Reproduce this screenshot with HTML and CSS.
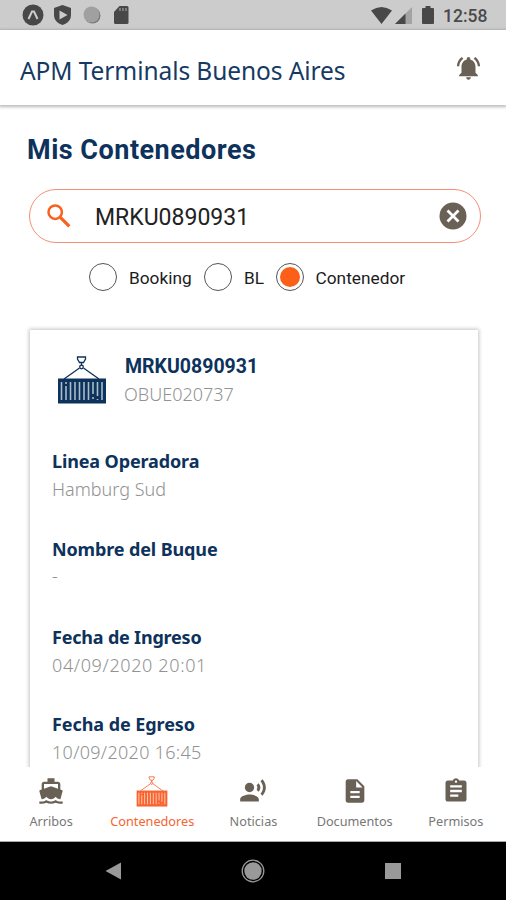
FILE: index.html
```html
<!DOCTYPE html>
<html lang="es">
<head>
<meta charset="utf-8">
<title>APM Terminals Buenos Aires</title>
<link rel="stylesheet" href="styles.css">
</head>
<body>
<svg class="defs" width="0" height="0" aria-hidden="true">
  <symbol id="container" viewBox="0 0 50 48">
    <g fill="none" stroke="currentColor" stroke-width="1.3">
      <path d="M20.500 1h8v2l-2 3.500h-4L20.500 3zM24.500 6.500v3M7 23l15.500-11M42 23L26.500 12"/>
      <circle cx="24.500" cy="11" r="1.800"/>
    </g>
    <path fill="currentColor" d="M1 22.500h48v25H1z"/>
    <path class="slats" fill="none" stroke-width="1.600" d="M4.500 26v18M9 26v2M9 30v14M13.500 26v18M18 26v18M22.500 26v18M27 26v18M31.500 26v18M36 26v12M40.500 26v14M45 26v18M36 41v2M40.500 43v1"/>
  </symbol>
</svg>
<div class="phone">
  <div class="status">
    <svg class="s-app" viewBox="0 0 22 22"><circle cx="11" cy="11" r="10.500" fill="#484848"/><path d="M6.500 15L10 7.500h2L15.500 15" fill="none" stroke="#ccc" stroke-width="2"/></svg>
    <svg class="s-shield" viewBox="0 0 17 20"><path fill="#484848" d="M8.500 0L17 3v7c0 5-3.500 8.500-8.500 10C3.500 18.500 0 15 0 10V3z"/><path fill="#ccc" d="M5.500 5.500v9l8-4.500z"/></svg>
    <svg class="s-dot" viewBox="0 0 18 18"><circle cx="9.500" cy="9.500" r="8" fill="#777"/><circle cx="8.500" cy="8.500" r="8" fill="#a0a0a0"/></svg>
    <svg class="s-sd" viewBox="0 0 15 18"><path fill="#484848" d="M5.500 0H13q1.500 0 1.500 1.500v15Q14.500 18 13 18H1.500Q0 18 0 16.500V6z"/><path stroke="#999" stroke-width="1.300" d="M6 2v3M9 2v3M12 2v3"/></svg>
    <svg class="s-wifi" viewBox="0 0 21 17"><path fill="#484848" d="M0 3.500Q10.500-3.500 21 3.500L10.500 17z"/></svg>
    <svg class="s-signal" viewBox="0 0 17 17"><path fill="#a3a3a3" d="M17 0v17H0z"/><path fill="#484848" d="M10.500 6.500V17H0z"/></svg>
    <svg class="s-battery" viewBox="0 0 12 18"><path fill="#484848" d="M3.500 0h5v2H11q1 0 1 1v14q0 1-1 1H1q-1 0-1-1V3q0-1 1-1h2.500z"/></svg>
    <span class="clock">12:58</span>
  </div>
  <header class="header">
    <h1 class="title">APM Terminals Buenos Aires</h1>
    <svg class="bell" viewBox="0 0 24 24"><path fill="currentColor" d="M7.580 4.080L6.150 2.650C3.750 4.480 2.170 7.300 2.030 10.500h2c.15-2.650 1.510-4.970 3.550-6.420zm12.390 6.420h2c-.15-3.200-1.730-6.020-4.120-7.850l-1.420 1.430c2.020 1.450 3.390 3.770 3.540 6.420zM18 11c0-3.070-1.640-5.640-4.500-6.320V4c0-.83-.67-1.500-1.500-1.500s-1.500.67-1.500 1.500v.68C7.630 5.360 6 7.920 6 11v5l-2 2v1h16v-1l-2-2v-5zm-6 11c1.100 0 2-.9 2-2h-4c0 1.100.89 2 2 2z"/></svg>
  </header>
  <main class="content">
    <h2 class="heading">Mis Contenedores</h2>
    <div class="search">
      <svg class="lens" viewBox="0 0 24 24"><circle cx="8.200" cy="8.200" r="6.700" fill="none" stroke="currentColor" stroke-width="2.500"/><path d="M13.300 13.300l9 9" stroke="currentColor" stroke-width="3.200"/></svg>
      <span class="query">MRKU0890931</span>
      <svg class="clear" viewBox="0 0 28 28"><circle cx="14" cy="14" r="13.500" fill="#696056"/><path d="M8.500 8.500l11 11M19.500 8.500l-11 11" stroke="#fff" stroke-width="2.800"/></svg>
    </div>
    <div class="options">
      <span class="radio"></span><span class="option booking">Booking</span>
      <span class="radio"></span><span class="option bl">BL</span>
      <span class="radio checked"></span><span class="option cont">Contenedor</span>
    </div>
    <section class="card">
      <div class="card-head">
        <svg class="box"><use href="#container"/></svg>
        <div>
          <div class="code">MRKU0890931</div>
          <div class="value booking-no">OBUE020737</div>
        </div>
      </div>
      <div class="field"><div class="label l1">Linea Operadora</div><div class="value v1">Hamburg Sud</div></div>
      <div class="field"><div class="label l2">Nombre del Buque</div><div class="value dash">-</div></div>
      <div class="field"><div class="label l3">Fecha de Ingreso</div><div class="value v3">04/09/2020 20:01</div></div>
      <div class="field"><div class="label l4">Fecha de Egreso</div><div class="value v4">10/09/2020 16:45</div></div>
    </section>
  </main>
  <nav class="tabs">
    <div class="tab"><svg viewBox="0 0 24 24"><path fill="currentColor" d="M20 21c-1.390 0-2.780-.47-4-1.320-2.440 1.710-5.560 1.710-8 0C6.780 20.530 5.390 21 4 21H2v2h2c1.380 0 2.740-.35 4-.99 2.520 1.290 5.480 1.290 8 0 1.260.65 2.620.99 4 .99h2v-2h-2zM3.950 19H4c1.600 0 3.020-.88 4-2 .98 1.120 2.400 2 4 2s3.020-.88 4-2c.98 1.120 2.400 2 4 2h.05l1.890-6.680c.08-.26.06-.54-.06-.78s-.34-.42-.6-.5L20 10.620V6c0-1.100-.9-2-2-2h-3V1H9v3H6c-1.100 0-2 .9-2 2v4.620l-1.290.42c-.26.08-.48.26-.6.500s-.15.520-.06.780L3.950 19zM6 6h12v3.970L12 8 6 9.970V6z"/></svg><span class="t1">Arribos</span></div>
    <div class="tab active"><svg class="tab-box"><use href="#container"/></svg><span class="t2">Contenedores</span></div>
    <div class="tab"><svg viewBox="0 0 24 24"><circle cx="9" cy="9" r="4" fill="currentColor"/><path fill="currentColor" d="M9 15c-2.670 0-8 1.340-8 4v2h16v-2c0-2.660-5.330-4-8-4zm7.760-9.640l-1.680 1.690c.84 1.180.84 2.710 0 3.890l1.680 1.690c2.020-2.020 2.020-5.070 0-7.270zM20.070 2l-1.630 1.630c2.770 3.020 2.770 7.560 0 10.740L20.070 16c3.900-3.890 3.910-9.950 0-14z"/></svg><span class="t3">Noticias</span></div>
    <div class="tab"><svg viewBox="0 0 24 24"><path fill="currentColor" d="M14 2H6c-1.100 0-1.990.9-1.990 2L4 20c0 1.100.89 2 1.990 2H18c1.100 0 2-.9 2-2V8l-6-6zm2 16H8v-2h8v2zm0-4H8v-2h8v2zm-3-5V3.500L18.500 9H13z"/></svg><span class="t4">Documentos</span></div>
    <div class="tab"><svg viewBox="0 0 24 24"><path fill="currentColor" d="M19 3h-4.180C14.400 1.840 13.300 1 12 1c-1.300 0-2.400.84-2.820 2H5c-1.100 0-2 .9-2 2v14c0 1.100.9 2 2 2h14c1.100 0 2-.9 2-2V5c0-1.100-.9-2-2-2zm-7 0c.55 0 1 .45 1 1s-.45 1-1 1-1-.45-1-1 .45-1 1-1zm2 14H7v-2h7v2zm3-4H7v-2h10v2zm0-4H7V7h10v2z"/></svg><span class="t5">Permisos</span></div>
  </nav>
  <div class="system">
    <svg viewBox="0 0 24 24"><path fill="#999" d="M4.500 12L20 3.500v17z"/></svg>
    <svg viewBox="0 0 24 24"><circle cx="12" cy="12" r="10.800" fill="none" stroke="#999" stroke-width="1.300"/><circle cx="12" cy="12" r="8.700" fill="#999"/></svg>
    <svg viewBox="0 0 24 24"><path fill="#999" d="M4 4h16v16H4z"/></svg>
  </div>
</div>
</body>
</html>
```
FILE: styles.css
```css
* { box-sizing: border-box; }
body { margin: 0; background: #fff; font-family: "Noto Sans", sans-serif; }
h1, h2 { margin: 0; font-weight: 400; }
svg { display: block; flex: none; }
.defs { position: absolute; }
.slats { stroke: var(--slat); }
.phone { width: 506px; height: 900px; display: flex; flex-direction: column; overflow: hidden; white-space: nowrap; }

.status { height: 30px; flex: none; background: #ccc; display: flex; align-items: center; padding-left: 22px; }
.s-app { width: 22px; height: 22px; }
.s-shield { width: 17px; height: 20px; margin-left: 10px; }
.s-dot { width: 18px; height: 18px; margin-left: 12px; }
.s-sd { width: 15px; height: 18px; margin-left: 13px; }
.s-wifi { width: 21px; height: 17px; margin-left: 242px; }
.s-signal { width: 17px; height: 17px; margin-left: 3px; }
.s-battery { width: 12px; height: 18px; margin-left: 10px; }
.clock { margin-left: 9px; font: 500 17.500px/30px Roboto, sans-serif; color: #4a4a4a; padding-top: 2px; }

.header { height: 75px; flex: none; display: flex; align-items: center; justify-content: space-between; padding: 0 23px 0 20px; background: #fff; box-shadow: 0 1px 3px 1px rgba(0,0,0,.27); position: relative; }
.title { font-size: 24.500px; line-height: 34px; color: #153a63; padding-top: 7px; letter-spacing: -.08px; }
.bell { width: 29px; height: 28px; color: #696056; }

.content { height: 662px; flex: none; overflow: hidden; padding: 26px 28px 0; }
.heading { font: 700 27px/36px Roboto, sans-serif; letter-spacing: .5px; margin-left: -1px; color: #0d325b; padding-top: 1px; height: 36px; }
.search { height: 54px; margin: 22px -3px 0 1px; border: 1px solid #f58f75; border-radius: 27px; display: flex; align-items: center; padding: 0 13px 0 17px; }
.lens { width: 24px; height: 24px; color: #f9611f; }
.query { flex: 1; margin-left: 24px; font: 400 23px/30px Roboto, sans-serif; color: #222; padding-top: 3px; }
.clear { width: 28px; height: 28px; }
.options { height: 28px; margin: 20px 0 0 61px; display: flex; align-items: center; }
.radio { width: 28px; height: 28px; flex: none; border: 1px solid #555; border-radius: 50%; display: flex; }
.checked::before { content: ""; width: 20px; height: 20px; margin: 3px; border-radius: 50%; background: #fc6018; }
.option { font: 400 17.300px/28px Roboto, sans-serif; color: #1c1c1c; margin-left: 12px; padding-top: 1px; }
.booking { width: 75px; }
.bl { width: 31.500px; }

.card { width: 448px; height: 480px; margin: 39px 0 0 2px; padding: 23px 22px; background: #fff; box-shadow: 0 0 4px 1px rgba(0,0,0,.23); }
.card-head { display: flex; height: 90px; }
.box { width: 50px; height: 48px; margin: 3px 17px 0 5px; color: #0d325b; --slat: #a9bccb; }
.code { font: 700 19.500px/28px Roboto, sans-serif; color: #0d325b; margin-left: 1px; }
.label { font-size: 18px; line-height: 28px; font-weight: 700; color: #0d325b; }
.l1, .l2 { letter-spacing: -.13px; }
.l3 { letter-spacing: -.2px; }
.l4 { letter-spacing: -.07px; }
.value { font-size: 18px; line-height: 28px; font-weight: 300; color: #929292; }
.booking-no { margin-top: -1px; }
.v3 { letter-spacing: .63px; }
.v4 { letter-spacing: .3px; }
.dash { line-height: 25px; }
.field { height: 87.800px; padding-top: 4px; }

.tabs { height: 75px; flex: none; background: #fff; border-bottom: 1px solid #aaa; display: flex; position: relative; }
.tab { width: 101.200px; display: flex; flex-direction: column; align-items: center; padding: 10px 0 0 1px; color: #696056; }
.tab > svg { width: 28px; height: 28px; }
.tab > .tab-box { width: 32px; height: 31px; margin: -1px 0 -2px; --slat: #ffc6ad; }
.tab span { font-size: 12.700px; line-height: 20px; margin-top: 6px; color: #777; }
.tab.active, .tab.active span { color: #f9632f; }

.system { height: 58px; flex: none; background: #000; display: flex; justify-content: space-between; padding: 17px 101px 0; }
.system svg { width: 24px; height: 24px; }
```
